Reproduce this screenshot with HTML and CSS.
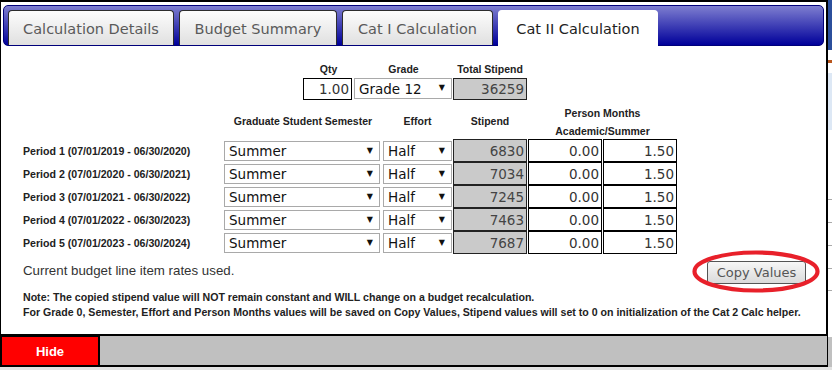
FILE: index.html
```html
<!DOCTYPE html>
<html lang="en">
<head>
    <meta charset="UTF-8">
    <meta name="viewport" content="width=device-width, initial-scale=1.0">
    <title>Cat II Calculation</title>
    <link rel="stylesheet" href="styles.css">
</head>
<body>

    <div class="screen">
        <div class="screen-main">
            <div class="screen-left">

                <div class="dialog">
                    <!-- Tabs -->
                    <div class="tabbar">
                        <a class="tab tab-details" href="#">Calculation Details</a>
                        <a class="tab tab-budget" href="#">Budget Summary</a>
                        <a class="tab tab-cat1" href="#">Cat I Calculation</a>
                        <a class="tab tab-cat2 active" href="#">Cat II Calculation</a>
                    </div>

                    <div class="panel">
                        <!-- Qty / Grade / Total -->
                        <div class="totals">
                            <div class="field">
                                <label for="qty">Qty</label>
                                <input type="text" id="qty" class="num qty" value="1.00">
                            </div>
                            <div class="field">
                                <label for="grade">Grade</label>
                                <div class="select sel-grade">
                                    <select id="grade"><option>Grade 12</option></select>
                                </div>
                            </div>
                            <div class="field">
                                <label for="totalStipend">Total Stipend</label>
                                <input type="text" id="totalStipend" class="num readonly" value="36259" readonly>
                            </div>
                        </div>

                        <!-- Periods -->
                        <div class="periods">
                            <div class="head"></div>
                            <div class="head">Graduate Student Semester</div>
                            <div class="head">Effort</div>
                            <div class="head">Stipend</div>
                            <div class="head head-months">Person Months<br>Academic/Summer</div>

                            <div class="period">Period 1 (07/01/2019 - 06/30/2020)</div>
                            <div class="select sel-semester"><select><option>Summer</option></select></div>
                            <div class="select"><select><option>Half</option></select></div>
                            <input type="text" class="num readonly" value="6830" readonly>
                            <input type="text" class="num" value="0.00">
                            <input type="text" class="num" value="1.50">

                            <div class="period">Period 2 (07/01/2020 - 06/30/2021)</div>
                            <div class="select sel-semester"><select><option>Summer</option></select></div>
                            <div class="select"><select><option>Half</option></select></div>
                            <input type="text" class="num readonly" value="7034" readonly>
                            <input type="text" class="num" value="0.00">
                            <input type="text" class="num" value="1.50">

                            <div class="period">Period 3 (07/01/2021 - 06/30/2022)</div>
                            <div class="select sel-semester"><select><option>Summer</option></select></div>
                            <div class="select"><select><option>Half</option></select></div>
                            <input type="text" class="num readonly" value="7245" readonly>
                            <input type="text" class="num" value="0.00">
                            <input type="text" class="num" value="1.50">

                            <div class="period">Period 4 (07/01/2022 - 06/30/2023)</div>
                            <div class="select sel-semester"><select><option>Summer</option></select></div>
                            <div class="select"><select><option>Half</option></select></div>
                            <input type="text" class="num readonly" value="7463" readonly>
                            <input type="text" class="num" value="0.00">
                            <input type="text" class="num" value="1.50">

                            <div class="period">Period 5 (07/01/2023 - 06/30/2024)</div>
                            <div class="select sel-semester"><select><option>Summer</option></select></div>
                            <div class="select"><select><option>Half</option></select></div>
                            <input type="text" class="num readonly" value="7687" readonly>
                            <input type="text" class="num" value="0.00">
                            <input type="text" class="num" value="1.50">
                        </div>

                        <!-- Rates + copy -->
                        <div class="actions">
                            <span class="rates">Current budget line item rates used.</span>
                            <button type="button" class="btn-copy">Copy Values</button>
                            <svg class="circle" width="130" height="45" viewBox="0 0 130 45">
                                <ellipse cx="65" cy="22.5" rx="61.5" ry="19" fill="none" stroke="#e8202a" stroke-width="4.2"/>
                            </svg>
                        </div>

                        <!-- Note -->
                        <p class="note">
                            Note: The copied stipend value will NOT remain constant and WILL change on a budget recalculation.<br>
                            For Grade 0, Semester, Effort and Person Months values will be saved on Copy Values, Stipend values will set to 0 on initialization of the Cat 2 Calc helper.
                        </p>
                    </div>
                </div>

                <div class="bottombar">
                    <button type="button" class="btn-hide">Hide</button>
                </div>
            </div>

            <div class="backdrop"></div>
        </div>
        <div class="footer-strip"></div>
    </div>

</body>
</html>
```

FILE: styles.css
```css
* {
    box-sizing: border-box;
    margin: 0;
    padding: 0;
}

body {
    font-family: "Liberation Sans", Arial, sans-serif;
    background-color: #fff;
    color: #222;
}

.screen {
    width: 832px;
    height: 370px;
    overflow: hidden;
    display: flex;
    flex-direction: column;
}

.screen-main {
    display: flex;
    height: 367px;
}

.screen-left {
    width: 828px;
    display: flex;
    flex-direction: column;
}

/* page behind the dialog, only a sliver shows */
.backdrop {
    width: 4px;
    background: linear-gradient(to bottom,
        #2b4f9c 0, #2b4f9c 50px,
        #fff 50px, #fff 60px,
        #b9561d 60px, #b9561d 63px,
        #fff 63px, #fff 73px,
        #dde8f5 73px, #dde8f5 130px,
        #fff 130px, #fff 199px,
        #aaa 199px, #aaa 200px,
        #fff 200px, #fff 222px,
        #aaa 222px, #aaa 223px,
        #fff 223px, #fff 245px,
        #aaa 245px, #aaa 246px,
        #fff 246px, #fff 268px,
        #aaa 268px, #aaa 269px,
        #fff 269px, #fff 290px,
        #aaa 290px, #aaa 291px,
        #fff 291px, #fff 337px,
        #c0c0c0 337px);
}

.footer-strip {
    height: 3px;
    background-color: #e2e2e2;
}

.dialog {
    height: 336px;
    background-color: #fff;
    border: 1px solid #000;
    border-top-width: 2px;
    border-right-width: 2px;
    border-bottom-width: 2px;
    padding: 3px 2px 0 2px;
}

/* ---- tabs ---- */
.tabbar {
    height: 41px;
    display: flex;
    align-items: flex-end;
    gap: 5px;
    padding: 4px 4px 0;
    border: 1px solid #00007a;
    border-radius: 5px;
    background: linear-gradient(to bottom, #7e7ed0, #00009a);
}

.tab {
    display: block;
    height: 35px;
    padding-top: 2px;
    line-height: 32px;
    text-align: center;
    white-space: nowrap;
    font-family: "DejaVu Sans", Verdana, sans-serif;
    font-size: 14.5px;
    color: #5a5a5a;
    text-decoration: none;
    border: 1px solid #2c2c2c;
    border-bottom: none;
    border-radius: 4px 4px 0 0;
    background: linear-gradient(to bottom, #fcfcfc, #e0e0e0);
}

.tab-details { width: 166px; }
.tab-budget { width: 158px; }
.tab-cat1 { width: 151px; }
.tab-cat2 { width: 160px; }

.tab.active {
    height: 36px;
    margin-bottom: -1px;
    color: #222;
    background: #fff;
    border-color: #fff;
}

/* ---- panel ---- */
.panel {
    padding: 16px 18px 0 20px;
}

.totals {
    display: grid;
    grid-template-columns: 51px 99px 74px;
    margin-left: 280px;
}

.field label {
    display: block;
    font-size: 10.5px;
    font-weight: bold;
    line-height: 14px;
    margin-bottom: 2px;
    text-align: center;
    color: #222;
}

.field .qty {
    width: 49px;
}

.num {
    display: block;
    width: 100%;
    height: 23px;
    border: 1px solid #000;
    padding: 0 2px 0 0;
    text-align: right;
    font-family: "DejaVu Sans", Verdana, sans-serif;
    font-size: 13.5px;
    color: #333;
    background-color: #fff;
    outline: none;
}

.totals .num {
    height: 22px;
}

.num.readonly {
    background-color: #cacaca;
    color: #444;
    border-color: #222;
}

.select {
    position: relative;
    height: 20px;
    align-self: center;
}

.select select {
    appearance: none;
    -webkit-appearance: none;
    width: 100%;
    height: 100%;
    border: 1px solid #a9a9a9;
    border-radius: 0;
    background-color: #fff;
    padding: 0 0 0 4px;
    font-family: "DejaVu Sans", Verdana, sans-serif;
    font-size: 13.5px;
    color: #111;
}

.select::after {
    content: "\25BC";
    position: absolute;
    right: 7px;
    top: 5px;
    font-family: "DejaVu Sans", sans-serif;
    font-size: 8px;
    line-height: 9px;
    color: #111;
    pointer-events: none;
}

.sel-grade {
    width: 98px;
    height: 21px;
    margin-top: 1px;
}

.sel-semester {
    width: 156px;
}

.periods {
    display: grid;
    grid-template-columns: 200px 158px 69px 74px 74px 74px;
    grid-template-rows: 36px;
    grid-auto-rows: 23px;
    column-gap: 1px;
    margin-top: 3px;
}

.head {
    display: flex;
    align-items: center;
    justify-content: center;
    text-align: center;
    font-size: 10.5px;
    font-weight: bold;
    color: #222;
}

.head-months {
    grid-column: span 2;
    line-height: 18px;
    padding-top: 1px;
}

.period {
    display: flex;
    align-items: center;
    font-size: 10.6px;
    font-weight: bold;
    color: #222;
}

/* ---- actions ---- */
.actions {
    position: relative;
    display: flex;
    justify-content: space-between;
    align-items: flex-start;
    margin-top: 7px;
}

.rates {
    padding-top: 2px;
    font-size: 13.3px;
    line-height: 16px;
    color: #333;
}

.btn-copy {
    width: 99px;
    height: 23px;
    border: 1px solid #555;
    border-radius: 3px;
    background: linear-gradient(to bottom, #f7f7f7, #dadada);
    font-family: "DejaVu Sans", Verdana, sans-serif;
    font-size: 13px;
    color: #555;
    cursor: pointer;
}

.circle {
    position: absolute;
    right: -15px;
    top: -12px;
    pointer-events: none;
}

.note {
    margin-top: 6px;
    font-size: 10.6px;
    font-weight: bold;
    line-height: 15px;
    color: #222;
}

/* ---- bottom bar ---- */
.bottombar {
    height: 31px;
    display: flex;
    background-color: #c0c0c0;
    border-right: 1px solid #000;
    border-bottom: 2px solid #000;
}

.btn-hide {
    width: 100px;
    height: 29px;
    border: 2px solid #000;
    border-top-width: 1px;
    border-bottom: none;
    background-color: #ff0000;
    color: #fff;
    font-family: "Liberation Sans", Arial, sans-serif;
    font-size: 13px;
    font-weight: bold;
    cursor: pointer;
}
```
